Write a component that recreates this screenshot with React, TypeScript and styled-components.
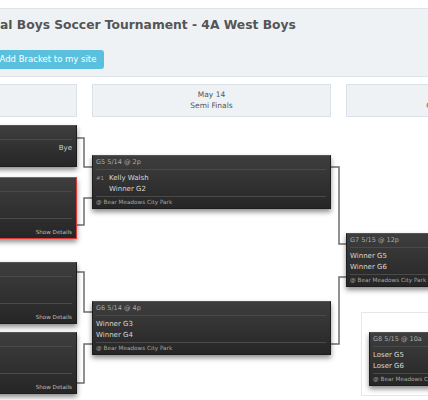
import styled, { createGlobalStyle } from 'styled-components';

type Team = { seed?: number; name: string; note?: string };

type Game = {
  id: string;
  when: string;
  teams: Team[];
  place?: string;
  details?: boolean;
  top: number;
  alert?: boolean;
};

type Round = { date: string; title: string; games: Game[] };

const PARK = '@ Bear Meadows City Park';

const rounds: Round[] = [
  {
    date: 'May 13',
    title: 'Quarter Finals',
    games: [
      { id: 'G1', when: '5/13 @ 10a', top: 8, teams: [{ seed: 1, name: 'Kelly Walsh', note: 'Bye' }, { name: '' }] },
      { id: 'G2', when: '5/13 @ 2p', top: 10, alert: true, details: true, place: PARK, teams: [{ seed: 4, name: 'Rock Springs' }, { seed: 5, name: 'Evanston' }] },
      { id: 'G3', when: '5/13 @ 10a', top: 23, details: true, place: PARK, teams: [{ seed: 2, name: 'Natrona County' }, { seed: 7, name: 'Green River' }] },
      { id: 'G4', when: '5/13 @ 12p', top: 8, details: true, place: PARK, teams: [{ seed: 3, name: 'Jackson' }, { seed: 6, name: 'Star Valley' }] },
    ],
  },
  {
    date: 'May 14',
    title: 'Semi Finals',
    games: [
      { id: 'G5', when: '5/14 @ 2p', top: 38, place: PARK, teams: [{ seed: 1, name: 'Kelly Walsh' }, { name: 'Winner G2' }] },
      { id: 'G6', when: '5/14 @ 4p', top: 92, place: PARK, teams: [{ name: 'Winner G3' }, { name: 'Winner G4' }] },
    ],
  },
  {
    date: 'May 15',
    title: 'Championship Game',
    games: [
      { id: 'G7', when: '5/15 @ 12p', top: 116, place: PARK, teams: [{ name: 'Winner G5' }, { name: 'Winner G6' }] },
    ],
  },
];

const thirdPlace: Game = {
  id: 'G8',
  when: '5/15 @ 10a',
  top: 0,
  place: PARK,
  teams: [{ name: 'Loser G5' }, { name: 'Loser G6' }],
};

// bracket lines, in bracket coordinates
const connectors = [
  '247,54 254,54 254,83 262,83',
  '247,141 254,141 254,114 262,114',
  '247,188 254,188 254,228 262,228',
  '247,299 254,299 254,260 262,260',
  '501,83 509,83 509,160 516,160',
  '501,260 509,260 509,193 516,193',
];

const GlobalStyle = createGlobalStyle`
  html, body {
    margin: 0;
    padding: 0;
    background: #fff;
  }
  body {
    font-family: "DejaVu Sans", Verdana, sans-serif;
  }
`;

const Viewport = styled.div`
  width: 428px;
  height: 400px;
  overflow: hidden;
`;

const Page = styled.div`
  width: 1000px;
  margin-left: -170px;
  padding-top: 8px;
`;

const HeaderPanel = styled.header`
  display: flex;
  gap: 12px;
  padding: 8px 10px 7px;
  background: #eef2f5;
  border-top: 1px solid #dfe4ea;
  border-bottom: 1px solid #dfe4ea;
`;

const Logo = styled.div`
  width: 100px;
  height: 52px;
  flex: none;
`;

const Info = styled.div`
  display: flex;
  flex-direction: column;
`;

const Title = styled.h1`
  margin: 0;
  font-size: 12.3px;
  line-height: 16px;
  font-weight: 700;
  color: #555;
  white-space: nowrap;
`;

const ButtonRow = styled.div`
  display: flex;
  gap: 4px;
  margin-top: 17px;
`;

const InfoButton = styled.button`
  height: 19px;
  padding: 0 8px;
  border: none;
  border-radius: 3px;
  background: #5bc0de;
  color: #fff;
  font-family: inherit;
  font-size: 8.5px;
  line-height: 19px;
  white-space: nowrap;
  cursor: pointer;
`;

const Bracket = styled.div`
  position: relative;
  display: flex;
  gap: 15px;
  padding-left: 8px;
  margin-top: 7px;
`;

const Lines = styled.svg`
  position: absolute;
  left: 0;
  top: 0;
  width: 100%;
  height: 400px;
  overflow: visible;
  pointer-events: none;
`;

const Column = styled.div`
  position: relative;
  width: 239px;
  flex: none;
  display: flex;
  flex-direction: column;
`;

const RoundHeader = styled.div`
  box-sizing: border-box;
  height: 33px;
  padding-top: 4px;
  border: 1px solid #dae1e8;
  background: #eef2f5;
  color: #555;
  font-size: 7.5px;
  line-height: 11px;
  text-align: center;
  white-space: nowrap;
`;

const Match = styled.div<{ $top: number; $alert?: boolean }>`
  margin-top: ${(p) => p.$top}px;
  border: 1px solid ${(p) => (p.$alert ? '#de3b3b' : '#1d1d1d')};
  border-top-color: ${(p) => (p.$alert ? '#de3b3b' : '#545454')};
  background: linear-gradient(#3e3e3e, #262626);
  box-shadow: 0 3px 5px rgba(0, 0, 0, 0.45);
  color: #d9d9d9;
`;

const MatchHead = styled.div`
  height: 13px;
  margin: 0 4px 0 3px;
  border-bottom: 1px solid #4a4a4a;
  font-size: 6.5px;
  line-height: 13px;
  color: #aaa;
  white-space: nowrap;
`;

const TeamList = styled.div`
  padding: 2px 4px 2px 3px;
`;

const TeamRow = styled.div`
  display: flex;
  align-items: center;
  height: 11px;
  font-size: 7px;
  white-space: nowrap;
`;

const Seed = styled.span`
  width: 13px;
  flex: none;
  font-size: 5.5px;
  color: #999;
`;

const TeamName = styled.span`
  flex: 1;
`;

const Note = styled.span`
  color: #d0d0d0;
`;

const MatchFoot = styled.div<{ $details?: boolean }>`
  margin: 0 4px 0 3px;
  padding: ${(p) => (p.$details ? '1px 0 2px' : '0')};
  border-top: 1px solid #4a4a4a;
  font-size: 5.7px;
  line-height: ${(p) => (p.$details ? '8px' : '11px')};
  color: #a6a6a6;
  white-space: nowrap;
`;

const DetailsLink = styled.div`
  text-align: right;
  color: #bdbdbd;
  font-size: 5.6px;
`;

const ThirdPlace = styled.div`
  margin: 25px 0 0 15px;
  padding: 19px 0 9px 7px;
  border: 1px solid #e3e6ea;
`;

function MatchBox({ game }: { game: Game }) {
  const seeded = game.teams.some((t) => t.seed);
  return (
    <Match $top={game.top} $alert={game.alert}>
      <MatchHead>
        {game.id} {game.when}
      </MatchHead>
      <TeamList>
        {game.teams.map((t, i) => (
          <TeamRow key={i}>
            {seeded && <Seed>{t.seed ? `#${t.seed}` : ''}</Seed>}
            <TeamName>{t.name}</TeamName>
            {t.note && <Note>{t.note}</Note>}
          </TeamRow>
        ))}
      </TeamList>
      {game.place && (
        <MatchFoot $details={game.details}>
          <div>{game.place}</div>
          {game.details && <DetailsLink>Show Details</DetailsLink>}
        </MatchFoot>
      )}
    </Match>
  );
}

export default function App() {
  return (
    <>
      <GlobalStyle />
      <Viewport>
        <Page>
          <HeaderPanel>
            <Logo>
              <svg width="52" height="52" viewBox="0 0 52 52">
                <circle cx="26" cy="26" r="24" fill="#fff" stroke="#555" strokeWidth="2" />
                <polygon points="26,16 35,23 32,33 20,33 17,23" fill="#555" />
              </svg>
            </Logo>
            <Info>
              <Title>Regional Boys Soccer Tournament - 4A West Boys</Title>
              <ButtonRow>
                <InfoButton>Print</InfoButton>
                <InfoButton>Add Bracket to my site</InfoButton>
              </ButtonRow>
            </Info>
          </HeaderPanel>

          <Bracket>
            <Lines>
              {connectors.map((pts) => (
                <polyline key={pts} points={pts} fill="none" stroke="#6c6c6c" strokeWidth="1.5" />
              ))}
            </Lines>
            {rounds.map((round, r) => (
              <Column key={round.date}>
                <RoundHeader>
                  {round.date}
                  <br />
                  {round.title}
                </RoundHeader>
                {round.games.map((g) => (
                  <MatchBox key={g.id} game={g} />
                ))}
                {r === rounds.length - 1 && (
                  <ThirdPlace>
                    <MatchBox game={thirdPlace} />
                  </ThirdPlace>
                )}
              </Column>
            ))}
          </Bracket>
        </Page>
      </Viewport>
    </>
  );
}
